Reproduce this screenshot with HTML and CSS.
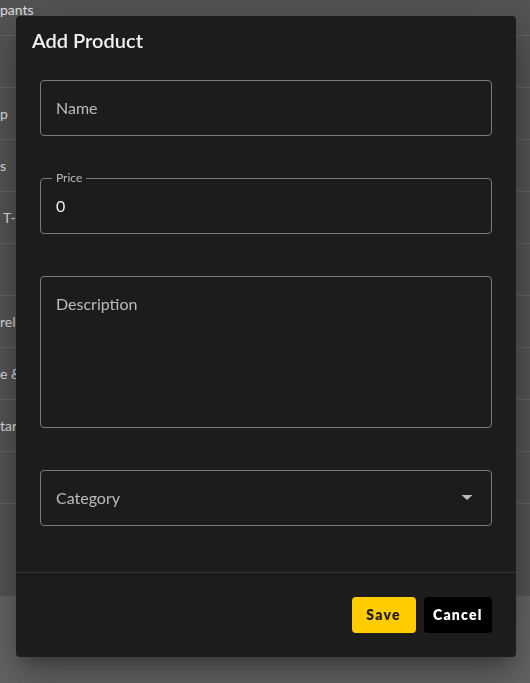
FILE: index.html
```html
<!DOCTYPE html>
<html lang="en">
<head>
<meta charset="utf-8">
<title>Add Product</title>
<link rel="stylesheet" href="styles.css">
</head>
<body>
<div class="page">
  <div class="table">
    <div class="row"><span class="cell">pants</span></div>
    <div class="row"><span class="cell"></span></div>
    <div class="row"><span class="cell">p</span></div>
    <div class="row"><span class="cell">s</span></div>
    <div class="row"><span class="cell cell-indent">T-Shirt</span></div>
    <div class="row"><span class="cell"></span></div>
    <div class="row"><span class="cell">rel</span></div>
    <div class="row"><span class="cell">e &amp;</span></div>
    <div class="row"><span class="cell">tar</span></div>
    <div class="row"><span class="cell"></span></div>
    <div class="table-footer"></div>
  </div>
</div>

<div class="dialog" role="dialog" aria-labelledby="dlg-title">
  <h2 class="dialog-title" id="dlg-title">Add Product</h2>
  <div class="dialog-content">
    <div class="field"><span class="placeholder">Name</span></div>
    <div class="field">
      <span class="field-label">Price</span>
      <span class="value">0</span>
    </div>
    <div class="field field-multiline"><span class="placeholder">Description</span></div>
    <div class="field field-select">
      <span class="placeholder">Category</span>
      <svg class="arrow" width="24" height="24" viewBox="0 0 24 24" aria-hidden="true"><path d="M6.5 10l5.5 5 5.5-5z" fill="#bdbdbd"/></svg>
    </div>
  </div>
  <div class="dialog-actions">
    <button class="btn btn-save">Save</button>
    <button class="btn btn-cancel">Cancel</button>
  </div>
</div>
</body>
</html>
```

FILE: styles.css
```css
* { box-sizing: border-box; }

html, body {
  margin: 0;
  padding: 0;
  height: 100%;
}

body {
  background: #666666;
  font-family: Lato, "Noto Sans", sans-serif;
  overflow: hidden;
}

.page {
  height: 100%;
}

.table {
  background: #555555;
  margin-top: -16px;
}

.row {
  height: 52px;
  border-bottom: 1px solid #656565;
  display: flex;
  align-items: center;
  color: #e2e2e2;
  font-size: 14px;
}

.cell {
  white-space: nowrap;
}

.cell-indent {
  padding-left: 3px;
}

.table-footer {
  height: 92px;
}

.dialog {
  position: fixed;
  left: 16px;
  top: 16px;
  width: 500px;
  height: 641px;
  background: #1c1c1c;
  border-radius: 4px;
  display: flex;
  flex-direction: column;
  box-shadow: 0 11px 15px -7px rgba(0,0,0,0.25), 0 24px 38px 3px rgba(0,0,0,0.18), 0 9px 46px 8px rgba(0,0,0,0.15);
}

.dialog-title {
  margin: 0;
  padding: 12px 16px;
  font-size: 20px;
  line-height: 24px;
  font-weight: 600;
  color: #f2f2f2;
}

.dialog-content {
  flex: 1;
  padding: 16px 24px 46px;
  display: flex;
  flex-direction: column;
  gap: 42px;
}

.field {
  position: relative;
  height: 56px;
  border: 1px solid #7a7a7a;
  border-radius: 4px;
  padding: 0 15px 2px;
  display: flex;
  align-items: center;
  font-size: 16px;
}

.placeholder {
  color: #bcbcbc;
}

.value {
  color: #f0f0f0;
}

.field-label {
  position: absolute;
  top: -7px;
  left: 11px;
  padding: 0 4px;
  font-size: 12px;
  line-height: 12px;
  color: #bcbcbc;
  background: #1c1c1c;
}

.field-multiline {
  height: 152px;
  align-items: flex-start;
  padding-top: 16px;
  line-height: 22px;
}

.field-select {
  justify-content: space-between;
  padding-right: 12px;
}

.arrow {
  display: block;
}

.dialog-actions {
  border-top: 1px solid #363636;
  padding: 24px;
  display: flex;
  justify-content: flex-end;
  gap: 8px;
}

.btn {
  height: 36px;
  min-width: 64px;
  padding: 0 9.5px 2px;
  border: none;
  border-radius: 4px;
  font-family: Lato, "Noto Sans", sans-serif;
  font-size: 14px;
  font-weight: 800;
  letter-spacing: 1.2px;
  cursor: pointer;
}

.btn-save {
  background: #ffcc00;
  color: #1e1e1e;
}

.btn-cancel {
  background: #000000;
  color: #ffffff;
}
```
